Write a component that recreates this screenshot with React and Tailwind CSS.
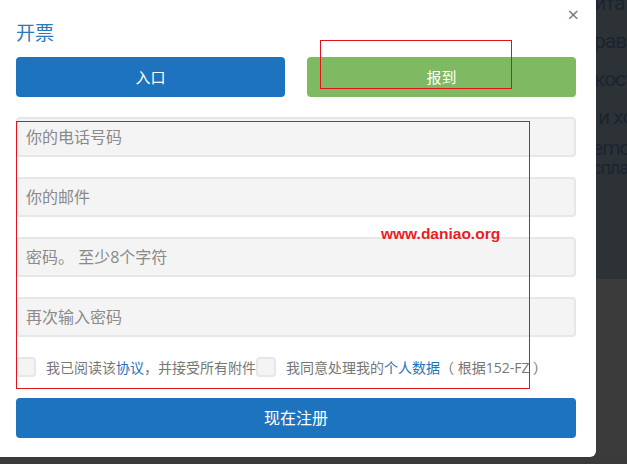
import React from 'react';

const font = "font-['Open_Sans','Noto_Sans_CJK_SC',sans-serif]";

function Field({ placeholder }) {
    return (
        <input
            placeholder={placeholder}
            className="h-10 w-full rounded border-2 border-[#e7e7e7] bg-[#f4f4f4] px-[8px] text-[16px] text-[#555] outline-none placeholder:text-[#8a8a8a]"
        />
    );
}

function Box() {
    return <span className="h-5 w-5 shrink-0 rounded-[4px] border-2 border-[#e7e7e7] bg-[#f4f4f4]" />;
}

export default function App() {
    return (
        <div className={`flex h-[464px] w-[627px] flex-col overflow-hidden bg-[#3a3a3a] ${font}`}>
            <div className="flex h-[457px]">
                {/* modal */}
                <div className="relative flex w-[596px] shrink-0 flex-col rounded-br-md bg-white pl-4 pr-5">
                    <button className="absolute right-[17px] top-[5px] text-[20px] leading-none text-[#777]">×</button>

                    <h4 className="mt-[20px] h-[37px] text-[19px] leading-[26px] text-[#2a78bd]">开票</h4>

                    <div className="flex gap-[22px]">
                        <button className="h-10 flex-1 rounded bg-[#1e73be] text-[15px] text-white">入口</button>
                        <button className="h-10 flex-1 rounded bg-[#7fb961] text-[15px] text-white">报到</button>
                    </div>

                    <div className="mt-5 flex flex-col gap-5">
                        <Field placeholder="你的电话号码" />
                        <Field placeholder="你的邮件" />
                        <Field placeholder="密码。 至少8个字符" />
                        <Field placeholder="再次输入密码" />
                    </div>

                    <div className="mt-5 flex h-5 items-center text-[14px] text-[#777]">
                        <Box />
                        <span className="ml-[10px] whitespace-nowrap">我已阅读该<a className="text-[#1e73be]">协议</a>，并接受所有附件</span>
                        <Box />
                        <span className="ml-[10px] whitespace-pre">我同意处理我的<a className="text-[#1e73be]">个人数据</a>（ 根据152-FZ ）</span>
                    </div>

                    <button className="mt-[21px] h-10 w-full rounded bg-[#1e73be] text-[16px] text-white">现在注册</button>

                    {/* red annotation marks over the screenshot */}
                    <div className="pointer-events-none absolute left-[320px] top-[40px] h-[49px] w-[192px] border border-[#e2121c]" />
                    <div className="pointer-events-none absolute left-[16px] top-[121px] h-[268px] w-[514px] border border-[#e2121c]" />
                    <span className="pointer-events-none absolute left-[381px] top-[222px] font-['Liberation_Sans',sans-serif] text-[15.5px] font-bold text-[#ec1c24]">
                        www.daniao.org
                    </span>
                </div>

                {/* page behind the overlay */}
                <div className="flex flex-1 flex-col overflow-hidden">
                    <div className="h-[279px] bg-[#2d3237] font-['Roboto',sans-serif] text-[21px] leading-[38px] tracking-[-1px] whitespace-nowrap text-[#1a2530]">
                        <p className="-mt-[16px] -ml-[2px]">ита</p>
                        <p className="-ml-[2px]">рав.</p>
                        <p className="-ml-[2px]">кост</p>
                        <p className="ml-[2px]">и хо</p>
                        <p className="mt-[2px] -ml-[4px] leading-[20px]">emca</p>
                        <p className="-ml-[4px] text-[18px] leading-[20px]">сплат</p>
                    </div>
                    <div className="flex-1 bg-[#3b3b3b]" />
                </div>
            </div>
        </div>
    );
}
